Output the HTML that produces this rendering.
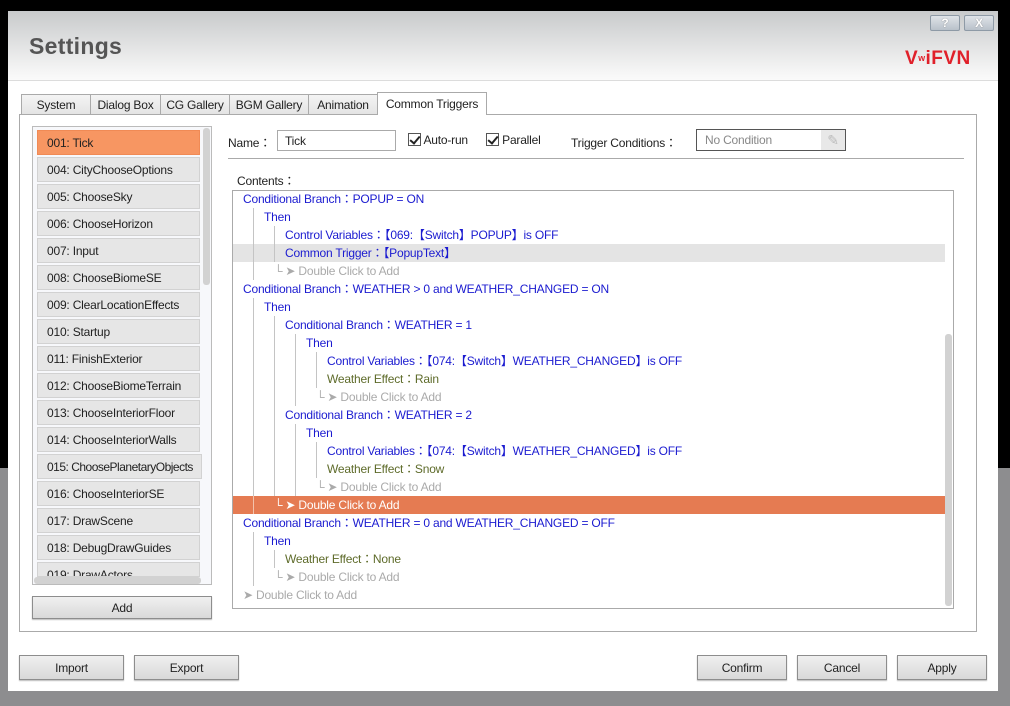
<!DOCTYPE html>
<html><head><meta charset="utf-8"><style>
*{box-sizing:border-box;margin:0;padding:0}
body{width:1010px;height:706px;position:relative;overflow:hidden;background:#000;font-family:"Liberation Sans","Noto Sans CJK JP",sans-serif;font-size:12px;color:#222;letter-spacing:-0.2px}
.a{position:absolute}
.win{left:8px;top:11px;width:990px;height:680px;background:#fff}
.hdr{left:8px;top:11px;width:990px;height:70px;background:linear-gradient(#c8cacb,#f4f4f4 85%,#fafafa);border-bottom:1px solid #dcdcdc}
.tb{top:15px;height:16px;width:30px;border:1px solid #8e9aa6;border-radius:2px;background:linear-gradient(#dfe3e8,#b9c1ca);color:#fff;font-size:12px;text-align:center;line-height:14px;font-weight:bold;text-shadow:0 0 1px #666}
.tab{top:94px;height:20px;border:1px solid #aaa;border-bottom:none;background:linear-gradient(#f4f4f4,#e4e4e4);line-height:20px;text-align:center;font-size:12px;color:#222}
.item{left:37px;width:163px;height:25px;background:#e6e6e6;border:1px solid #d2d2d2;line-height:25px;padding-left:9px;font-size:12px;color:#222;white-space:nowrap;overflow:hidden}
.btn{height:25px;border:1px solid #8d8d8d;background:linear-gradient(#f0f0f0,#d9d9d9);text-align:center;line-height:25px;box-shadow:0 1px 1px #bbb}
.row{left:233px;width:712px;height:18px;line-height:19px;white-space:nowrap;font-size:12px}
.t{position:absolute;top:0}
.b{color:#1b1bd0}.g{color:#aaa}.o{color:#5e6b2a}.w{color:#fff}
.bar{position:absolute;top:0;width:1px;height:18px;background:#c4c4c4}
.cb{display:inline-block;width:13px;height:13px;border:1px solid #555;background:#fff;vertical-align:-2px;position:relative}
.cb:after{content:"";position:absolute;left:3px;top:0px;width:4px;height:8px;border:solid #222;border-width:0 2px 2px 0;transform:rotate(40deg)}
</style></head><body>
<div class="a" style="left:0;top:468px;width:1010px;height:238px;background:#8d8d8f"></div>
<div class="a win"></div>
<div class="a hdr"></div>
<div class="a" style="left:29px;top:33px;font-size:23px;font-weight:bold;color:#555;letter-spacing:0.3px">Settings</div>
<div class="a tb" style="left:930px">?</div>
<div class="a tb" style="left:964px">X</div>
<div class="a" style="left:905px;top:48px;font-size:19px;font-weight:bold;color:#e0202a;letter-spacing:0.5px">V<span style="font-size:13px">ʷ</span>iFVN</div>

<div class="a tab" style="left:21px;width:70px">System</div>
<div class="a tab" style="left:90px;width:71px">Dialog Box</div>
<div class="a tab" style="left:160px;width:70px">CG Gallery</div>
<div class="a tab" style="left:229px;width:80px">BGM Gallery</div>
<div class="a tab" style="left:308px;width:70px">Animation</div>
<div class="a" style="left:19px;top:114px;width:958px;height:518px;border:1px solid #aaa;background:#fff"></div>
<div class="a tab" style="left:377px;top:92px;width:110px;height:23px;background:#fff;line-height:22px">Common Triggers</div>

<div class="a" style="left:32px;top:126px;width:180px;height:459px;border:1px solid #bbb;background:#f7f8fb"></div>
<div class="a item" style="top:130px;background:#f79662;border-color:#f08a55">001: Tick</div>
<div class="a item" style="top:157px">004: CityChooseOptions</div>
<div class="a item" style="top:184px">005: ChooseSky</div>
<div class="a item" style="top:211px">006: ChooseHorizon</div>
<div class="a item" style="top:238px">007: Input</div>
<div class="a item" style="top:265px">008: ChooseBiomeSE</div>
<div class="a item" style="top:292px">009: ClearLocationEffects</div>
<div class="a item" style="top:319px">010: Startup</div>
<div class="a item" style="top:346px">011: FinishExterior</div>
<div class="a item" style="top:373px">012: ChooseBiomeTerrain</div>
<div class="a item" style="top:400px">013: ChooseInteriorFloor</div>
<div class="a item" style="top:427px">014: ChooseInteriorWalls</div>
<div class="a item" style="top:454px;width:165px;letter-spacing:-0.5px">015: ChoosePlanetaryObjects</div>
<div class="a item" style="top:481px">016: ChooseInteriorSE</div>
<div class="a item" style="top:508px">017: DrawScene</div>
<div class="a item" style="top:535px">018: DebugDrawGuides</div>
<div class="a item" style="top:562px;height:15px">019: DrawActors</div>
<div class="a" style="left:203px;top:128px;width:7px;height:157px;background:#d2d2d2;border-radius:3px"></div>
<div class="a" style="left:34px;top:577px;width:167px;height:7px;background:#d2d2d2;border-radius:3px"></div>
<div class="a btn" style="left:32px;top:596px;width:180px;height:23px;line-height:23px">Add</div>

<div class="a" style="left:228px;top:134px">Name：</div>
<div class="a" style="left:277px;top:130px;width:119px;height:21px;border:1px solid #aaa;padding-left:7px;line-height:21px">Tick</div>
<div class="a" style="left:408px;top:133px"><span class="cb"></span> Auto-run</div>
<div class="a" style="left:486px;top:133px"><span class="cb"></span> Parallel</div>
<div class="a" style="left:571px;top:134px">Trigger Conditions：</div>
<div class="a" style="left:696px;top:129px;width:150px;height:22px;border:1px solid #555;padding-left:8px;line-height:21px;color:#888">No Condition</div>
<div class="a" style="left:821px;top:130px;width:24px;height:20px;background:#e8e8e8;color:#bbb;font-size:14px;text-align:center;line-height:20px">✎</div>
<div class="a" style="left:228px;top:158px;width:736px;height:1px;background:#aaa"></div>
<div class="a" style="left:237px;top:172px">Contents：</div>

<div class="a" style="left:232px;top:190px;width:722px;height:419px;border:1px solid #aaa;background:#fff"></div>
<div class="a" style="left:945px;top:334px;width:7px;height:272px;background:#d2d2d2;border-radius:3px"></div>

<div class="a row" style="top:190px"><span class="t b" style="left:10px">Conditional Branch：POPUP = ON</span></div>
<div class="a row" style="top:208px"><i class="bar" style="left:20px"></i><span class="t b" style="left:31px">Then</span></div>
<div class="a row" style="top:226px"><i class="bar" style="left:20px"></i><i class="bar" style="left:41px"></i><span class="t b" style="left:52px">Control Variables：【069:【Switch】POPUP】is OFF</span></div>
<div class="a row" style="top:244px;background:#e4e4e4"><i class="bar" style="left:20px"></i><i class="bar" style="left:41px"></i><span class="t b" style="left:52px">Common Trigger：【PopupText】</span></div>
<div class="a row" style="top:262px"><i class="bar" style="left:20px"></i><span class="t g" style="left:41px">└ ➤ Double Click to Add</span></div>
<div class="a row" style="top:280px"><span class="t b" style="left:10px">Conditional Branch：WEATHER &gt; 0 and WEATHER_CHANGED = ON</span></div>
<div class="a row" style="top:298px"><i class="bar" style="left:20px"></i><span class="t b" style="left:31px">Then</span></div>
<div class="a row" style="top:316px"><i class="bar" style="left:20px"></i><i class="bar" style="left:41px"></i><span class="t b" style="left:52px">Conditional Branch：WEATHER = 1</span></div>
<div class="a row" style="top:334px"><i class="bar" style="left:20px"></i><i class="bar" style="left:41px"></i><i class="bar" style="left:62px"></i><span class="t b" style="left:73px">Then</span></div>
<div class="a row" style="top:352px"><i class="bar" style="left:20px"></i><i class="bar" style="left:41px"></i><i class="bar" style="left:62px"></i><i class="bar" style="left:83px"></i><span class="t b" style="left:94px">Control Variables：【074:【Switch】WEATHER_CHANGED】is OFF</span></div>
<div class="a row" style="top:370px"><i class="bar" style="left:20px"></i><i class="bar" style="left:41px"></i><i class="bar" style="left:62px"></i><i class="bar" style="left:83px"></i><span class="t o" style="left:94px">Weather Effect：Rain</span></div>
<div class="a row" style="top:388px"><i class="bar" style="left:20px"></i><i class="bar" style="left:41px"></i><i class="bar" style="left:62px"></i><span class="t g" style="left:83px">└ ➤ Double Click to Add</span></div>
<div class="a row" style="top:406px"><i class="bar" style="left:20px"></i><i class="bar" style="left:41px"></i><span class="t b" style="left:52px">Conditional Branch：WEATHER = 2</span></div>
<div class="a row" style="top:424px"><i class="bar" style="left:20px"></i><i class="bar" style="left:41px"></i><i class="bar" style="left:62px"></i><span class="t b" style="left:73px">Then</span></div>
<div class="a row" style="top:442px"><i class="bar" style="left:20px"></i><i class="bar" style="left:41px"></i><i class="bar" style="left:62px"></i><i class="bar" style="left:83px"></i><span class="t b" style="left:94px">Control Variables：【074:【Switch】WEATHER_CHANGED】is OFF</span></div>
<div class="a row" style="top:460px"><i class="bar" style="left:20px"></i><i class="bar" style="left:41px"></i><i class="bar" style="left:62px"></i><i class="bar" style="left:83px"></i><span class="t o" style="left:94px">Weather Effect：Snow</span></div>
<div class="a row" style="top:478px"><i class="bar" style="left:20px"></i><i class="bar" style="left:41px"></i><i class="bar" style="left:62px"></i><span class="t g" style="left:83px">└ ➤ Double Click to Add</span></div>
<div class="a row" style="top:496px;background:#e57b52"><i class="bar" style="left:20px;background:#f3c3ac"></i><span class="t w" style="left:41px">└ ➤ Double Click to Add</span></div>
<div class="a row" style="top:514px"><span class="t b" style="left:10px">Conditional Branch：WEATHER = 0 and WEATHER_CHANGED = OFF</span></div>
<div class="a row" style="top:532px"><i class="bar" style="left:20px"></i><span class="t b" style="left:31px">Then</span></div>
<div class="a row" style="top:550px"><i class="bar" style="left:20px"></i><i class="bar" style="left:41px"></i><span class="t o" style="left:52px">Weather Effect：None</span></div>
<div class="a row" style="top:568px"><i class="bar" style="left:20px"></i><span class="t g" style="left:41px">└ ➤ Double Click to Add</span></div>
<div class="a row" style="top:586px"><span class="t g" style="left:10px">➤ Double Click to Add</span></div>

<div class="a btn" style="left:19px;top:655px;width:105px">Import</div>
<div class="a btn" style="left:134px;top:655px;width:105px">Export</div>
<div class="a btn" style="left:697px;top:655px;width:90px">Confirm</div>
<div class="a btn" style="left:797px;top:655px;width:90px">Cancel</div>
<div class="a btn" style="left:897px;top:655px;width:90px">Apply</div>
</body></html>
